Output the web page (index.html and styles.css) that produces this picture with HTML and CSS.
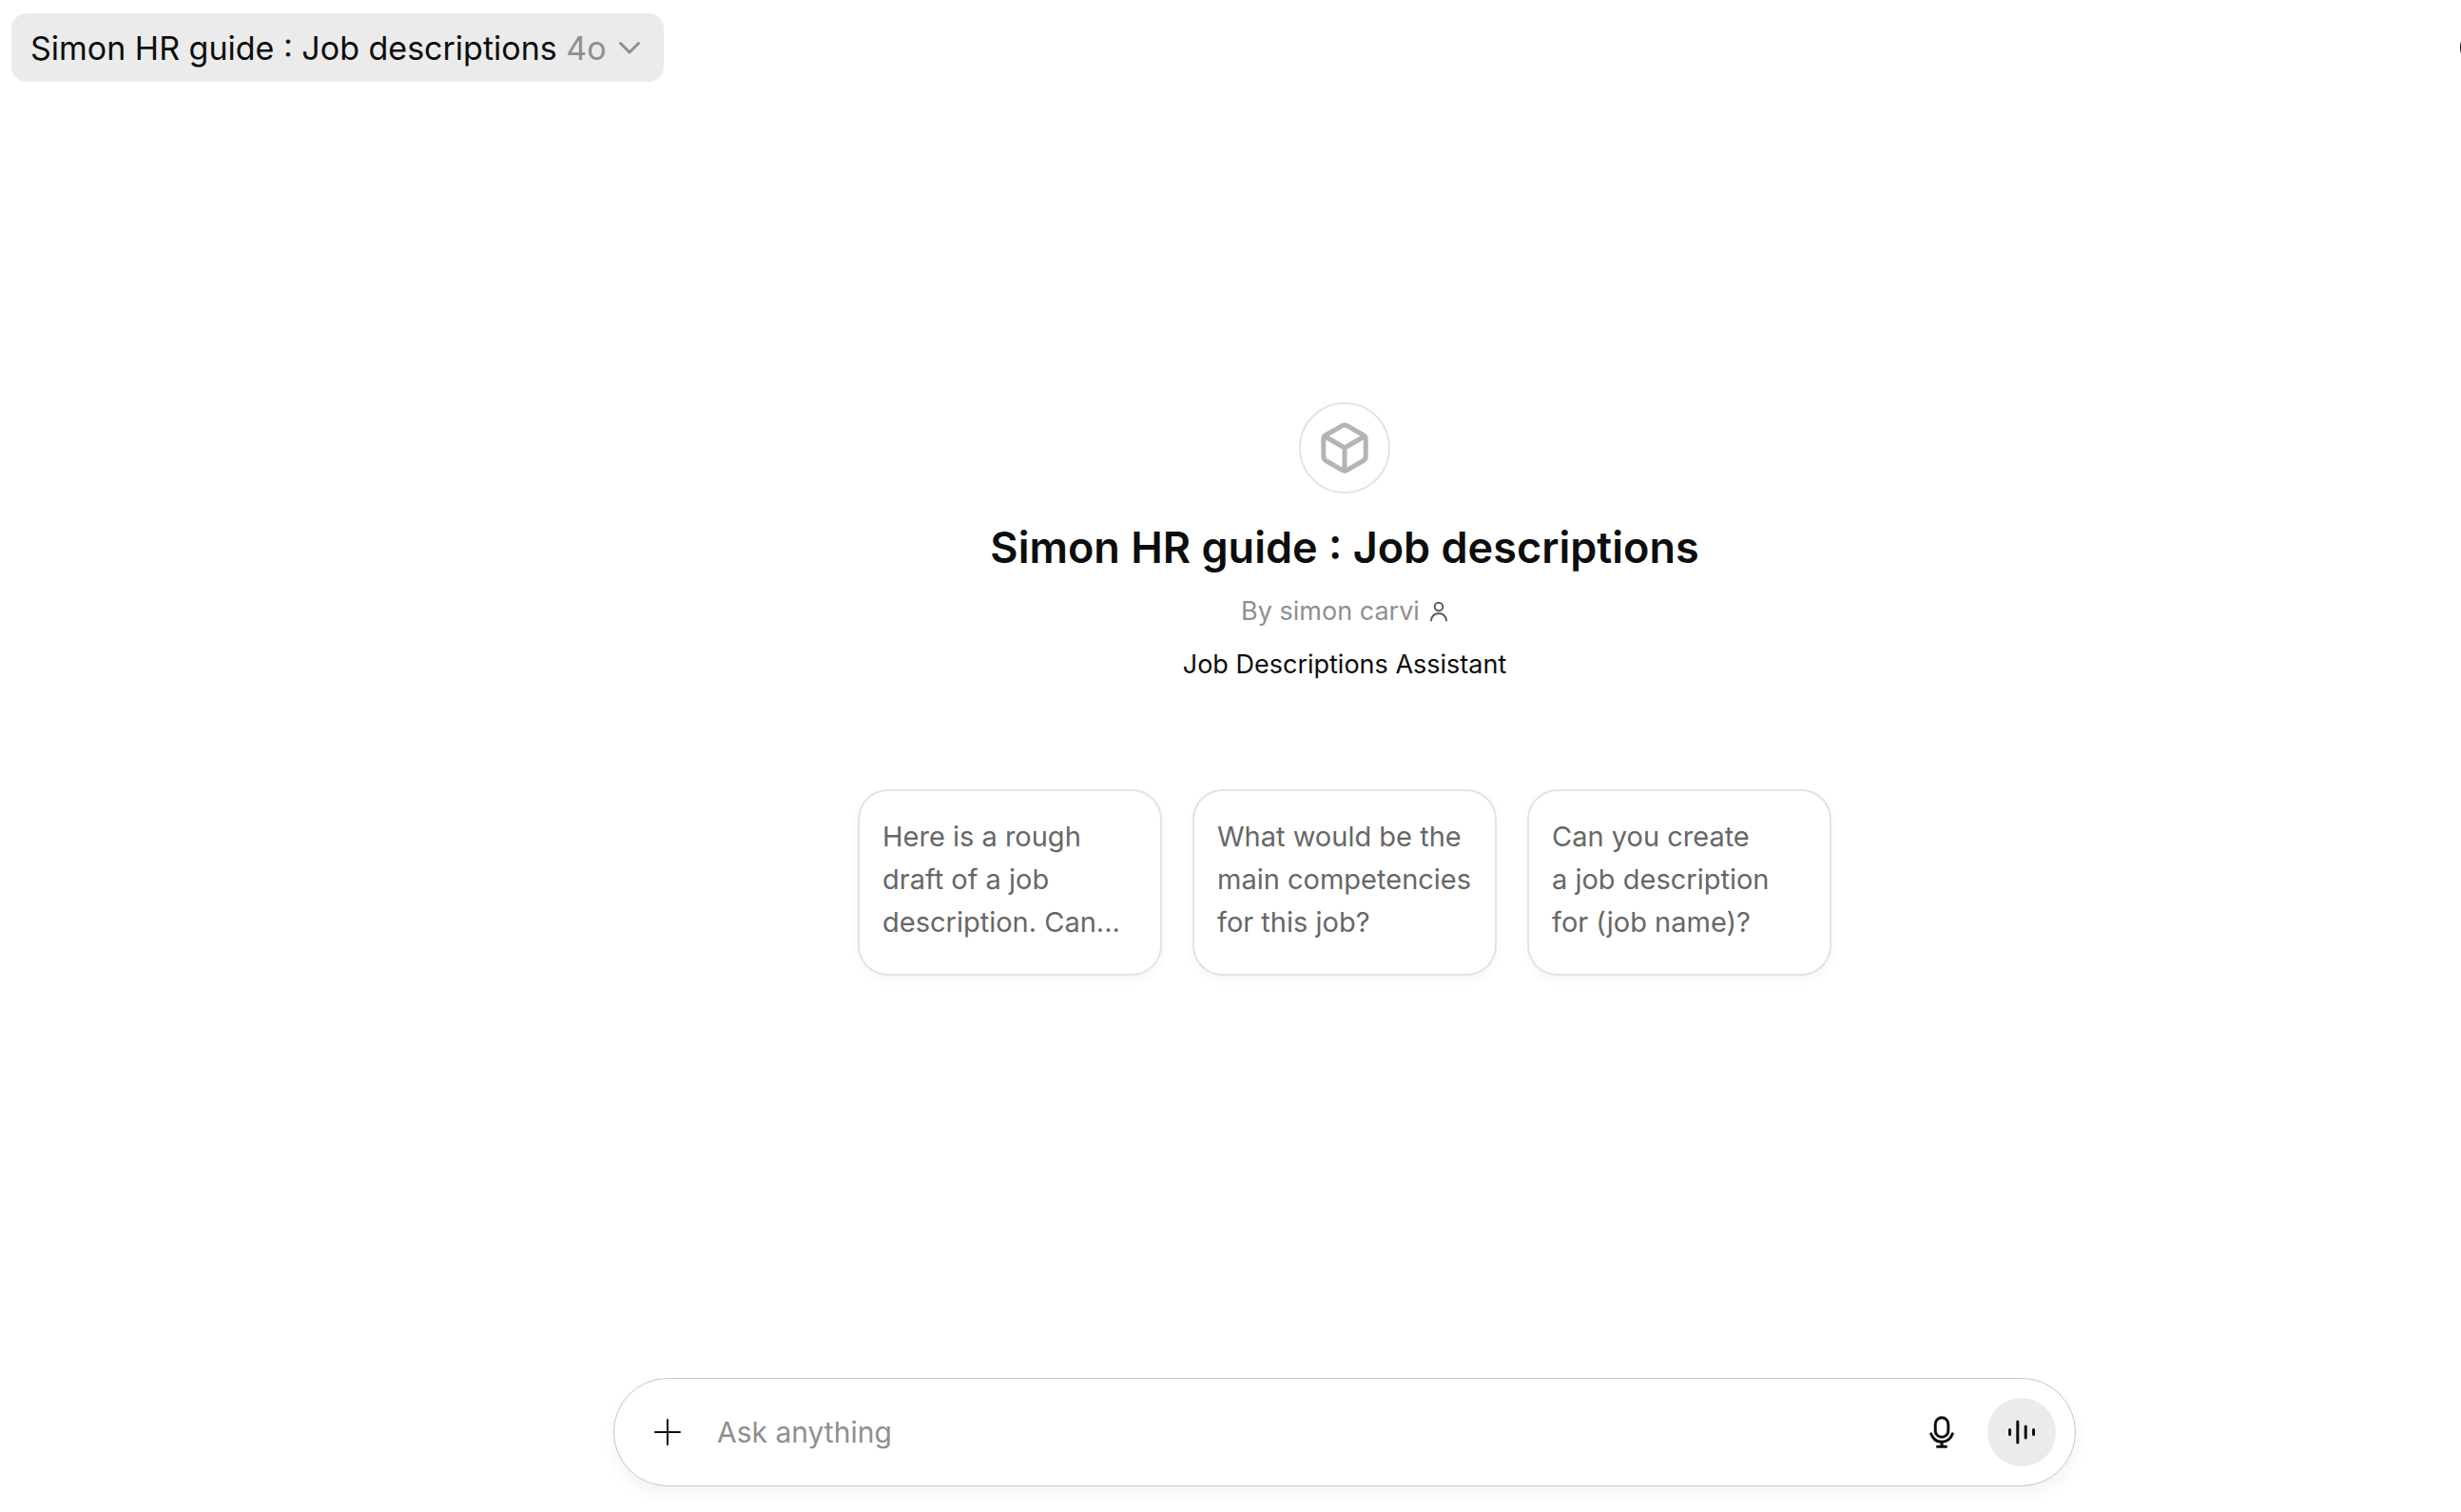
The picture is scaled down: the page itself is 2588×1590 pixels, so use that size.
FILE: index.html
```html
<!DOCTYPE html>
<html lang="en">
<head>
  <meta charset="UTF-8">
  <meta name="viewport" content="width=device-width, initial-scale=1">
  <title>Simon HR guide : Job descriptions</title>
  <link rel="stylesheet" href="styles.css">
</head>
<body>

  <header class="topbar">
    <button class="model-button" type="button">
      <span>Simon HR guide : Job descriptions <span class="model-version">4o</span></span>
      <svg class="chevron" viewBox="0 0 24 16" aria-hidden="true">
        <path d="M2.5 3.500 L12 13 L21.500 3.500"/>
      </svg>
    </button>
    <button class="chat-button" type="button" aria-label="Temporary chat">
      <svg viewBox="0 0 44 44" aria-hidden="true">
        <circle cx="22" cy="22" r="20"/>
      </svg>
    </button>
  </header>

  <main class="main">
    <section class="hero">
      <div class="logo">
        <svg viewBox="0 0 56 56" aria-hidden="true">
          <path d="M25.500 4.600 Q28 3.200 30.500 4.600 L47.700 14.500 Q50.200 16 50.200 18.900 V37.100 Q50.200 40 47.700 41.500 L30.500 51.400 Q28 52.800 25.500 51.400 L8.300 41.500 Q5.800 40 5.800 37.100 V18.900 Q5.800 16 8.300 14.500 Z"/>
          <path d="M7.500 16 L28 28 L48.500 16 M28 28 V52"/>
        </svg>
      </div>
      <h1>Simon HR guide : Job descriptions</h1>
      <div class="author">
        <span>By simon carvi</span>
        <svg viewBox="0 0 20 22" aria-hidden="true">
          <circle cx="10" cy="6" r="4.300"/>
          <path d="M2 20.500 C2.600 10.500 17.400 10.500 18 20.500"/>
        </svg>
      </div>
      <p class="description">Job Descriptions Assistant</p>

      <div class="prompts">
        <button class="prompt" type="button">Here is a rough draft of a job description. Can...</button>
        <button class="prompt" type="button">What would be the main competencies for this job?</button>
        <button class="prompt" type="button">Can you create a&nbsp;job&nbsp;description for (job name)?</button>
      </div>
    </section>

    <form class="composer">
      <button class="icon-button add" type="button" aria-label="Add files">
        <svg viewBox="0 0 40 40" aria-hidden="true">
          <path d="M20 7 V33 M7 20 H33"/>
        </svg>
      </button>
      <input class="composer-input" type="text" placeholder="Ask anything" aria-label="Ask anything">
      <button class="icon-button" type="button" aria-label="Dictate">
        <svg viewBox="0 0 40 40" aria-hidden="true">
          <rect x="13.200" y="4.700" width="13.600" height="20.600" rx="6.800"/>
          <path d="M8.700 21.800 C13 33 27 33 31.300 21.800 M20 30.500 V35 M15.500 35.200 H24.500"/>
        </svg>
      </button>
      <button class="icon-button voice" type="button" aria-label="Use voice mode">
        <svg viewBox="0 0 40 40" aria-hidden="true">
          <path d="M7.500 17.500 V22.500 M15.800 9 V31 M24.200 14 V26 M32.500 17.500 V22.500"/>
        </svg>
      </button>
    </form>
  </main>

</body>
</html>
```

FILE: styles.css
```css
* {
  box-sizing: border-box;
}

body {
  margin: 0;
  min-height: 100vh;
  display: flex;
  flex-direction: column;
  font-family: Inter, sans-serif;
  background: #fff;
  color: #0d0d0d;
  overflow-x: hidden;
}

button {
  padding: 0;
  border: none;
  background: none;
  font: inherit;
  color: inherit;
  cursor: pointer;
}

svg {
  display: block;
  fill: none;
  stroke: currentColor;
  stroke-linecap: round;
  stroke-linejoin: round;
}

.topbar {
  display: flex;
  align-items: center;
  justify-content: space-between;
  padding: 14px 0 14px 12px;
  overflow: hidden;
}

.model-button {
  display: flex;
  align-items: center;
  gap: 12px;
  height: 72px;
  padding: 0 24px 0 20px;
  border-radius: 16px;
  background: #ebebeb;
  font-size: 34px;
}

.model-version {
  color: #8f8f8f;
}

.chevron {
  width: 24px;
  height: 16px;
  color: #8f8f8f;
  stroke-width: 3;
}

.chat-button {
  margin-right: -43px;
}

.chat-button svg {
  width: 44px;
  height: 44px;
  stroke-width: 4;
}

.main {
  flex: 1;
  display: flex;
  flex-direction: column;
  align-items: center;
  padding: 0 0 27px 240px;
}

.hero {
  flex: 1;
  display: flex;
  flex-direction: column;
  align-items: center;
  justify-content: center;
  padding-bottom: 101px;
}

.logo {
  display: flex;
  align-items: center;
  justify-content: center;
  width: 96px;
  height: 96px;
  border: 2px solid #e3e3e3;
  border-radius: 50%;
  color: #b4b4b4;
}

.logo svg {
  width: 56px;
  height: 56px;
  stroke-width: 5;
}

h1 {
  margin: 27px 0 0;
  font-size: 45px;
  font-weight: 600;
  line-height: 60px;
}

.author {
  display: flex;
  align-items: center;
  gap: 10px;
  margin-top: 17px;
  font-size: 27px;
  line-height: 40px;
  color: #8f8f8f;
}

.author svg {
  width: 20px;
  height: 22px;
  color: #5d5d5d;
  stroke-width: 2;
}

.description {
  margin: 16px 0 0;
  font-size: 27px;
  line-height: 40px;
}

.prompts {
  display: flex;
  gap: 32px;
  margin-top: 111px;
}

.prompt {
  width: 320px;
  padding: 25px 20px 32px 24px;
  border: 2px solid #e3e3e3;
  border-radius: 32px;
  background: #fff;
  box-shadow: 0 4px 12px rgba(0, 0, 0, 0.04);
  font-size: 29px;
  line-height: 45px;
  text-align: left;
  color: #676767;
}

.composer {
  display: flex;
  align-items: center;
  width: 100%;
  max-width: 1538px;
  height: 114px;
  padding: 0 20px;
  border: 1px solid #c7c7c7;
  border-radius: 57px;
  background: #fff;
  box-shadow: 0 8px 16px rgba(0, 0, 0, 0.05);
}

.composer-input {
  flex: 1;
  min-width: 0;
  padding: 0 16px;
  border: none;
  outline: none;
  background: none;
  font: inherit;
  font-size: 30px;
  color: inherit;
}

.composer-input::placeholder {
  color: #8f8f8f;
  opacity: 1;
}

.icon-button {
  display: flex;
  align-items: center;
  justify-content: center;
  width: 72px;
  height: 72px;
  border-radius: 50%;
}

.icon-button svg {
  width: 40px;
  height: 40px;
  stroke-width: 3;
}

.add svg {
  stroke-width: 2;
}

.voice {
  margin-left: 12px;
  background: #ebebeb;
}
```
